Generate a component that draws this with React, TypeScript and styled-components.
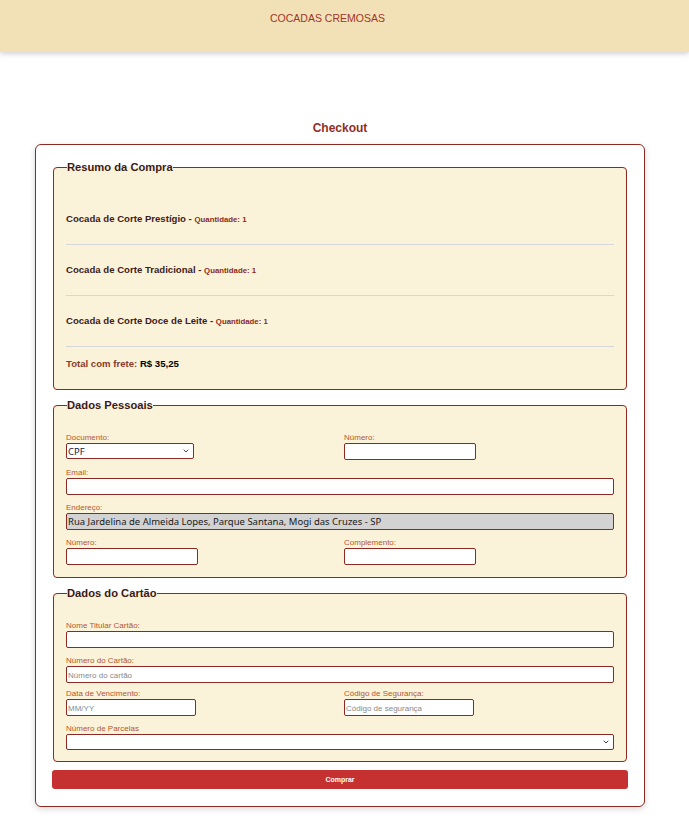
import React from "react";
import styled, { createGlobalStyle } from "styled-components";

const Global = createGlobalStyle`
  html, body { margin: 0; padding: 0; background: #ffffff; }
  body { font-family: "Liberation Sans", Arial, sans-serif; }
  * { box-sizing: border-box; }
`;

const Header = styled.header`
  height: 52px;
  background: #f2e1b6;
  box-shadow: 0 2px 5px rgba(0, 0, 0, 0.18);
  display: flex;
  justify-content: center;
  padding: 11px 34px 0 0;
`;

const Brand = styled.h1`
  margin: 0;
  font-size: 10.5px;
  font-weight: normal;
  line-height: 14px;
  color: #a1352c;
  height: 14px;
`;

const Main = styled.main`
  width: 610px;
  margin: 0 0 16px 35px;
  padding-top: 69px;
`;

const Title = styled.h2`
  margin: 0 0 8px;
  text-align: center;
  font-size: 12px;
  line-height: 15px;
  font-weight: bold;
  color: #8f2f24;
`;

const Card = styled.form`
  background: #ffffff;
  border: 1px solid #8b2a22;
  border-radius: 6px;
  box-shadow: 0 2px 6px rgba(0, 0, 0, 0.16);
  padding: 15px 16px 17px;
  display: flex;
  flex-direction: column;
  gap: 8px;
`;

const Fieldset = styled.fieldset<{ $pad: string }>`
  margin: 0 1px;
  background: #fbf3d9;
  border: 1px solid #8b2a22;
  border-radius: 4px;
  padding: ${(p) => p.$pad};
  min-width: 0;
`;

const Legend = styled.legend`
  padding: 0;
  margin-left: 1px;
  font-size: 11.2px;
  line-height: 14px;
  font-weight: bold;
  color: #3d1a16;
`;

const Item = styled.div`
  height: 51px;
  padding: 19px 0 0;
  border-bottom: 1px solid #d6d6dc;
  font-size: 9.6px;
  line-height: 12px;
  font-weight: bold;
  color: #3b2020;
  overflow: hidden;
`;

const Qty = styled.span`
  font-size: 7.8px;
  line-height: 1;
  color: #8b2a22;
`;

const Total = styled.div`
  margin-top: 11px;
  font-size: 9.6px;
  line-height: 12px;
  font-weight: bold;
  color: #8b3a2a;
`;

const Price = styled.span`
  color: #000000;
`;

const Grid = styled.div`
  display: grid;
  grid-template-columns: 1fr 1fr;
  column-gap: 8px;
  row-gap: 8px;
`;

const Field = styled.div<{ $full?: boolean; $tight?: boolean }>`
  display: flex;
  flex-direction: column;
  align-items: flex-start;
  grid-column: ${(p) => (p.$full ? "1 / -1" : "auto")};
  margin-top: ${(p) => (p.$tight ? "-2px" : "0")};
`;

const Label = styled.label`
  font-size: 8px;
  line-height: 10px;
  color: #b5562f;
`;

const Input = styled.input<{ $w?: number; $gray?: boolean }>`
  display: block;
  width: ${(p) => (p.$w ? `${p.$w}px` : "100%")};
  height: 17px;
  border: 1px solid #8b2a22;
  border-radius: 2px;
  padding: 0 1px;
  background: ${(p) => (p.$gray ? "#d3d3d3" : "#ffffff")};
  font-family: "Noto Sans", "DejaVu Sans", sans-serif;
  font-size: 9.5px;
  color: #1a1a1a;
  outline: none;
  &::placeholder {
    font-family: "Liberation Sans", Arial, sans-serif;
    font-size: 8px;
    color: #8a8a8a;
  }
`;

const SelectWrap = styled.div<{ $w?: number }>`
  position: relative;
  width: ${(p) => (p.$w ? `${p.$w}px` : "100%")};
  height: 16px;
`;

const Select = styled.select`
  display: block;
  appearance: none;
  width: 100%;
  height: 16px;
  border: 1px solid #8b2a22;
  border-radius: 2px;
  padding: 0 12px 0 1px;
  background: #ffffff;
  font-family: "Noto Sans", "DejaVu Sans", sans-serif;
  font-size: 9.5px;
  color: #1a1a4a;
  outline: none;
`;

const Chevron = styled.svg`
  position: absolute;
  right: 5px;
  top: 6px;
  width: 6px;
  height: 4px;
  pointer-events: none;
`;

const Button = styled.button`
  height: 19px;
  border: none;
  border-radius: 3px;
  background: #c53030;
  color: #ffffff;
  font-family: "Liberation Sans", Arial, sans-serif;
  font-size: 7px;
  font-weight: bold;
`;

const items = [
  "Cocada de Corte Prestígio",
  "Cocada de Corte Tradicional",
  "Cocada de Corte Doce de Leite",
];

function Dropdown({ w, children, defaultValue }: { w?: number; children: React.ReactNode; defaultValue?: string }) {
  return (
    <SelectWrap $w={w}>
      <Select defaultValue={defaultValue}>{children}</Select>
      <Chevron viewBox="0 0 6 4">
        <path d="M0.7 0.7 L3 3 L5.3 0.7" fill="none" stroke="#444" strokeWidth="1" />
      </Chevron>
    </SelectWrap>
  );
}

export default function App() {
  return (
    <>
      <Global />
      <Header>
        <Brand>COCADAS CREMOSAS</Brand>
      </Header>
      <Main>
        <Title>Checkout</Title>
        <Card onSubmit={(e) => e.preventDefault()}>
          <Fieldset $pad="20px 12px 19px">
            <Legend>Resumo da Compra</Legend>
            {items.map((name) => (
              <Item key={name}>
                {name} - <Qty>Quantidade: 1</Qty>
              </Item>
            ))}
            <Total>
              Total com frete: <Price>R$ 35,25</Price>
            </Total>
          </Fieldset>

          <Fieldset $pad="21px 12px 12px">
            <Legend>Dados Pessoais</Legend>
            <Grid>
              <Field>
                <Label>Documento:</Label>
                <Dropdown w={128} defaultValue="CPF">
                  <option>CPF</option>
                  <option>CNPJ</option>
                </Dropdown>
              </Field>
              <Field>
                <Label>Número:</Label>
                <Input $w={132} />
              </Field>
              <Field $full>
                <Label>Email:</Label>
                <Input />
              </Field>
              <Field $full>
                <Label>Endereço:</Label>
                <Input
                  $gray
                  readOnly
                  value="Rua Jardelina de Almeida Lopes, Parque Santana, Mogi das Cruzes - SP"
                />
              </Field>
              <Field>
                <Label>Número:</Label>
                <Input $w={132} />
              </Field>
              <Field>
                <Label>Complemento:</Label>
                <Input $w={132} />
              </Field>
            </Grid>
          </Fieldset>

          <Fieldset $pad="21px 12px 11px">
            <Legend>Dados do Cartão</Legend>
            <Grid>
              <Field $full>
                <Label>Nome Titular Cartão:</Label>
                <Input />
              </Field>
              <Field $full>
                <Label>Número do Cartão:</Label>
                <Input placeholder="Número do cartão" />
              </Field>
              <Field $tight>
                <Label>Data de Vencimento:</Label>
                <Input $w={130} placeholder="MM/YY" />
              </Field>
              <Field $tight>
                <Label>Código de Segurança:</Label>
                <Input $w={130} placeholder="Código de segurança" />
              </Field>
              <Field $full>
                <Label>Número de Parcelas</Label>
                <Dropdown>
                  <option></option>
                </Dropdown>
              </Field>
            </Grid>
          </Fieldset>
          <Button type="submit">Comprar</Button>
        </Card>
      </Main>
    </>
  );
}
